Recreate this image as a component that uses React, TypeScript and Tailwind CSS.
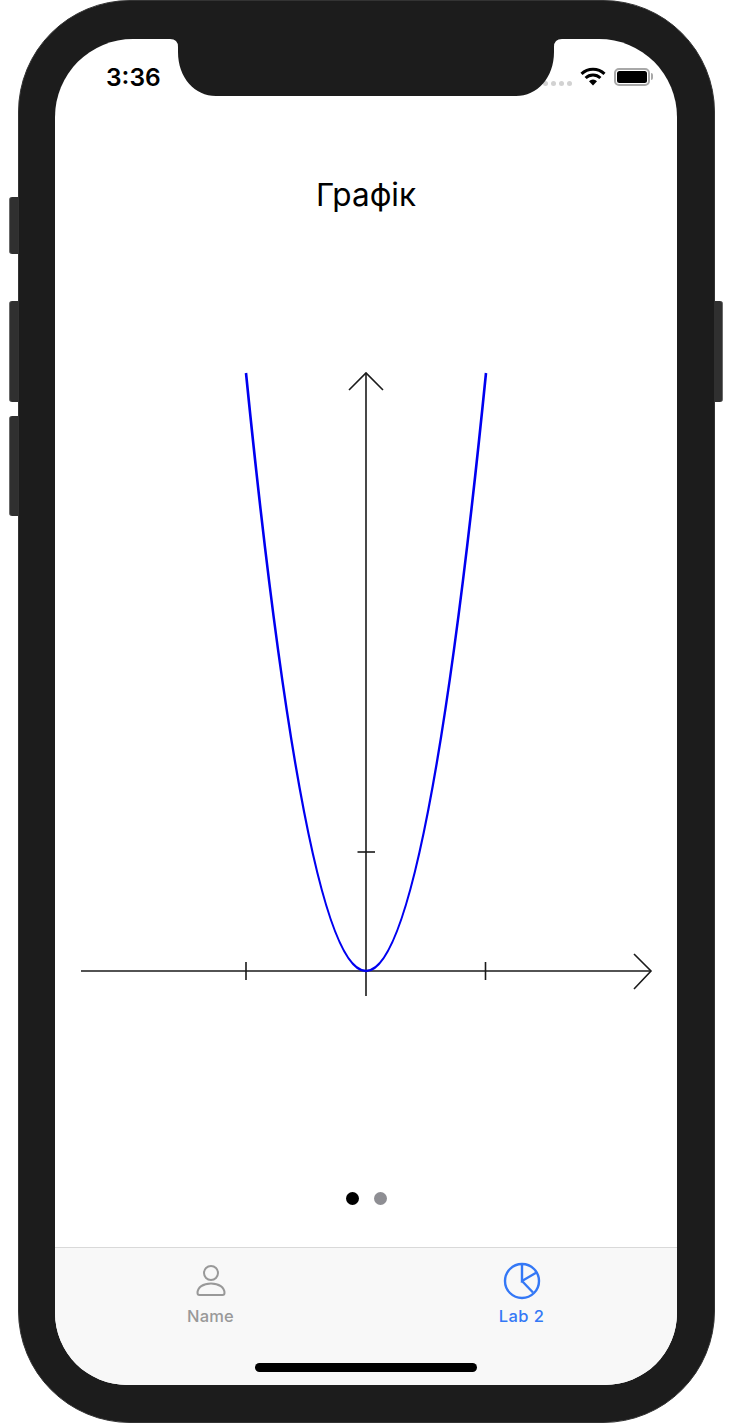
const sideButtons = [
  "absolute left-[-10px] top-[196px] h-[57px] w-[9px] rounded-l-[3px] bg-[#303030] border-l border-[#6b6b6b]",
  "absolute left-[-10px] top-[300px] h-[101px] w-[9px] rounded-l-[3px] bg-[#303030] border-l border-[#6b6b6b]",
  "absolute left-[-10px] top-[415px] h-[100px] w-[9px] rounded-l-[3px] bg-[#303030] border-l border-[#6b6b6b]",
  "absolute right-[-9px] top-[300px] h-[101px] w-[9px] rounded-r-[3px] bg-[#303030] border-r border-[#6b6b6b]",
];

function Notch() {
  return (
    <svg
      className="absolute left-[151px] top-[38px]"
      width="392"
      height="57"
      viewBox="170 39 392 57"
    >
      <path
        d="M170 39 Q178 39 178 47 L178 52 C178 78 195 96 216 96 L516 96 C537 96 554 78 554 52 L554 47 Q554 39 562 39 Z"
        fill="#1c1c1c"
      />
    </svg>
  );
}

function Wifi() {
  return (
    <svg width="26" height="19" viewBox="0 0 26 19" fill="none">
      <path d="M1.5 6.8 A16.5 16.5 0 0 1 24.5 6.8" stroke="#000" strokeWidth="3" />
      <path d="M5.6 11 A10.6 10.6 0 0 1 20.4 11" stroke="#000" strokeWidth="3" />
      <path d="M9 14.2 A5.6 5.6 0 0 1 17 14.2 L13 18.4 Z" fill="#000" />
    </svg>
  );
}

function Battery() {
  return (
    <div className="flex items-center gap-[1px]">
      <div className="h-[18px] w-[36px] rounded-[5px] border-2 border-[#a8a8a8] p-[1px]">
        <div className="h-full w-full rounded-[2.5px] bg-black" />
      </div>
      <div className="h-[7px] w-[2px] rounded-r-[2px] bg-[#a8a8a8]" />
    </div>
  );
}

function Chart() {
  return (
    <svg className="mt-[145px] block" width="622" height="640" viewBox="55 360 622 640" fill="none">
      <g stroke="#1a1a1a" strokeWidth="1.6">
        <path d="M81 971 H651" />
        <path d="M634 954 L651 971 L634 989" />
        <path d="M366 373 V996" />
        <path d="M349 390 L366 373 L383 390" />
        <path d="M246 962 V980" />
        <path d="M485.5 962 V980" />
        <path d="M357.5 852 H375" />
      </g>
      <path d="M246 373 Q366 1569 486 373" stroke="#0000f0" strokeWidth="2.6" />
    </svg>
  );
}

function PersonIcon() {
  return (
    <svg width="36" height="36" viewBox="0 0 36 36" fill="none" stroke="#999999" strokeWidth="2">
      <circle cx="18" cy="11" r="7" />
      <path d="M4.5 31 C4.5 25.5 10 21.5 18 21.5 C26 21.5 31.5 25.5 31.5 31 C31.5 32.5 30.5 33 29.5 33 H6.5 C5.5 33 4.5 32.5 4.5 31 Z" />
    </svg>
  );
}

function PieIcon() {
  return (
    <svg width="40" height="40" viewBox="0 0 40 40" fill="none" stroke="#3478f6" strokeWidth="2.4">
      <circle cx="20" cy="20" r="17" />
      <path d="M20 3 V20 L34.5 11.5" />
      <path d="M20 20 L31 31.5" />
    </svg>
  );
}

export default function App() {
  return (
    <div className="h-[1425px] w-[732px] bg-white pl-[18px] font-['Inter',sans-serif]">
      <div className="relative h-[1423px] w-[697px] rounded-[112px] border border-[#333333] bg-[#1c1c1c] pl-[36px] pt-[38px]">
        {sideButtons.map((cls) => (
          <div key={cls} className={cls} />
        ))}

        <div className="flex h-[1346px] w-[622px] flex-col overflow-hidden rounded-t-[78px] rounded-b-[72px] bg-white">
          <div className="flex h-[57px] shrink-0 items-start justify-between pl-[51px] pr-[24px] pt-[25px] text-black">
            <span className="text-[24.5px] font-semibold leading-[26px]">3:36</span>
            <div className="flex items-center pt-[3px]">
              <div className="mr-[8px] mt-[14px] flex gap-[3px]">
                {[0, 1, 2, 3, 4].map((i) => (
                  <span key={i} className="h-[5px] w-[5px] rounded-full bg-[#d2d2d2]" />
                ))}
              </div>
              <div className="mr-[8px]">
                <Wifi />
              </div>
              <Battery />
            </div>
          </div>

          <h1 className="mt-[79px] text-center text-[31.5px] font-normal leading-[40px] text-black">Графік</h1>

          <Chart />

          <div className="ml-[1px] mt-[192px] flex justify-center gap-[15px]">
            <span className="h-[13px] w-[13px] rounded-full bg-black" />
            <span className="h-[13px] w-[13px] rounded-full bg-[#8e8e93]" />
          </div>

          <div className="mt-auto flex h-[138px] flex-col border-t border-[#d9d9d9] bg-[#f8f8f8]">
            <div className="grid grid-cols-2 pt-[14px]">
              <div className="flex flex-col items-center">
                <PersonIcon />
                <span className="mt-[8px] text-[16.5px] font-medium leading-[20px] tracking-[0.2px] text-[#999999]">Name</span>
              </div>
              <div className="flex flex-col items-center">
                <div className="-my-[1px]">
                  <PieIcon />
                </div>
                <span className="mt-[6px] text-[16.5px] font-medium leading-[20px] tracking-[0.4px] text-[#3478f6]">Lab 2</span>
              </div>
            </div>
            <div className="mt-auto flex justify-center pb-[13px]">
              <div className="h-[9px] w-[222px] rounded-full bg-black" />
            </div>
          </div>
        </div>

        <Notch />
      </div>
    </div>
  );
}
